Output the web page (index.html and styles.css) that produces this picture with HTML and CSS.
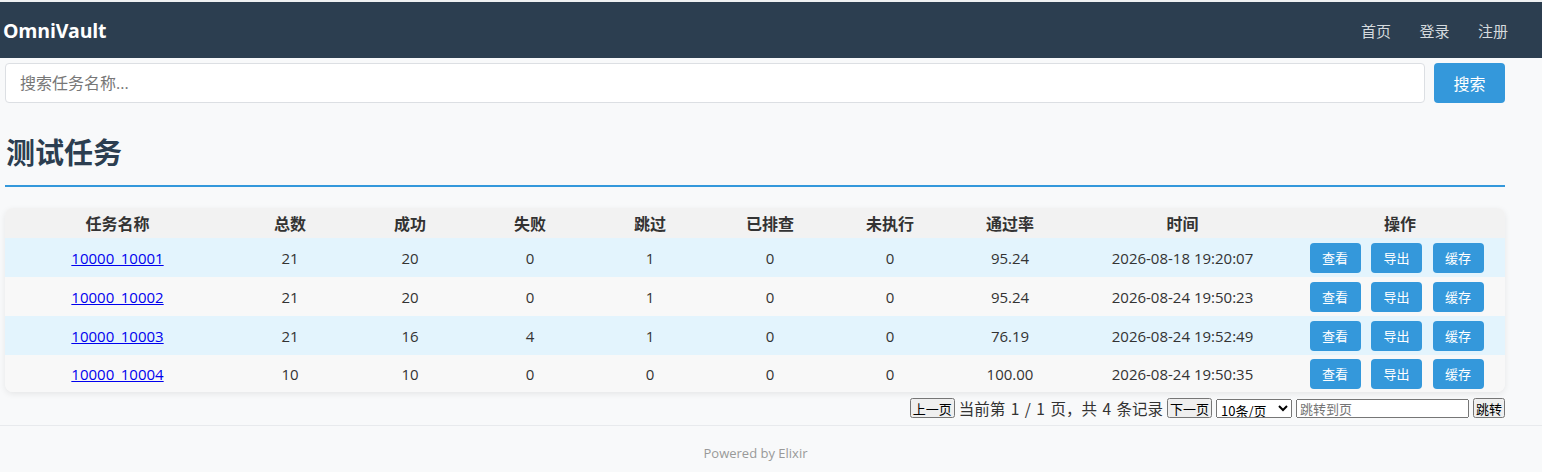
FILE: index.html
```html
<!DOCTYPE html>
<html lang="zh-CN">
<head>
<meta charset="utf-8">
<title>OmniVault</title>
<link rel="stylesheet" href="styles.css">
</head>
<body>
<nav class="navbar">
  <div class="brand">OmniVault</div>
  <div class="nav-links">
    <a href="#">首页</a>
    <a href="#">登录</a>
    <a href="#">注册</a>
  </div>
</nav>
<main class="container">
  <form class="search-row">
    <input class="search-input" type="text" placeholder="搜索任务名称...">
    <button class="search-btn" type="button">搜索</button>
  </form>
  <h1 class="title">测试任务</h1>
  <div class="table-card">
    <table class="tasks">
      <colgroup>
        <col class="c-name"><col class="c-num"><col class="c-num"><col class="c-num"><col class="c-num"><col class="c-num"><col class="c-num"><col class="c-num"><col class="c-time"><col class="c-ops">
      </colgroup>
      <thead>
        <tr><th>任务名称</th><th>总数</th><th>成功</th><th>失败</th><th>跳过</th><th>已排查</th><th>未执行</th><th>通过率</th><th>时间</th><th>操作</th></tr>
      </thead>
      <tbody>
        <tr><td><a href="#">10000_10001</a></td><td>21</td><td>20</td><td>0</td><td>1</td><td>0</td><td>0</td><td>95.24</td><td>2026-08-18 19:20:07</td><td class="ops"><div class="ops-wrap"><button>查看</button><button>导出</button><button>缓存</button></div></td></tr>
        <tr><td><a href="#">10000_10002</a></td><td>21</td><td>20</td><td>0</td><td>1</td><td>0</td><td>0</td><td>95.24</td><td>2026-08-24 19:50:23</td><td class="ops"><div class="ops-wrap"><button>查看</button><button>导出</button><button>缓存</button></div></td></tr>
        <tr><td><a href="#">10000_10003</a></td><td>21</td><td>16</td><td>4</td><td>1</td><td>0</td><td>0</td><td>76.19</td><td>2026-08-24 19:52:49</td><td class="ops"><div class="ops-wrap"><button>查看</button><button>导出</button><button>缓存</button></div></td></tr>
        <tr><td><a href="#">10000_10004</a></td><td>10</td><td>10</td><td>0</td><td>0</td><td>0</td><td>0</td><td>100.00</td><td>2026-08-24 19:50:35</td><td class="ops"><div class="ops-wrap"><button>查看</button><button>导出</button><button>缓存</button></div></td></tr>
      </tbody>
    </table>
  </div>
  <div class="pager">
    <button>上一页</button>
    <span class="pager-info">当前第 1 / 1 页，共 4 条记录</span>
    <button>下一页</button>
    <select><option>10条/页</option><option>20条/页</option></select>
    <input class="jump" type="text" placeholder="跳转到页">
    <button>跳转</button>
  </div>
</main>
<footer class="footer">Powered by Elixir</footer>
</body>
</html>
```

FILE: styles.css
```css
html, body {
  margin: 0;
  padding: 0;
}
body {
  background: #f8f9fa;
  font-family: "Open Sans", "Noto Sans CJK SC", sans-serif;
  color: #333;
  border-top: 2px solid #eef0f2;
}
.navbar {
  background: #2c3e50;
  height: 56px;
  display: flex;
  align-items: center;
  justify-content: space-between;
  padding: 0 34px 0 3px;
}
.brand {
  color: #fff;
  font-weight: 700;
  font-size: 19.5px;
  letter-spacing: -0.2px;
}
.nav-links {
  display: flex;
  gap: 28.5px;
}
.nav-links a {
  color: #d5dade;
  text-decoration: none;
  font-size: 15px;
}
.container {
  width: 1500px;
  padding: 0 5px;
}
.search-row {
  display: flex;
  gap: 9px;
  margin: 5px 0 0;
}
.search-input {
  flex: 1;
  height: 40px;
  box-sizing: border-box;
  border: 1px solid #dcdfe3;
  border-radius: 4px;
  padding: 0 14px;
  font-size: 16px;
  font-family: inherit;
  background: #fff;
}
.search-input::placeholder {
  color: #777;
}
.search-btn {
  width: 71px;
  height: 40px;
  border: none;
  border-radius: 4px;
  background: #3498db;
  color: #fff;
  font-size: 16px;
  font-family: inherit;
}
.title {
  margin: 30px 0 0;
  font-size: 29px;
  font-weight: 700;
  color: #2c3e50;
  line-height: 40px;
  padding-bottom: 12px;
  border-bottom: 2px solid #3498db;
  padding-left: 1px;
}
.table-card {
  margin-top: 21px;
  background: #f8f8f8;
  border-radius: 8px;
  box-shadow: 0 2px 6px rgba(0,0,0,0.08);
  overflow: hidden;
}
.tasks {
  width: 100%;
  border-collapse: collapse;
  table-layout: fixed;
  font-size: 15px;
}
.c-name { width: 225px; }
.c-num { width: 120px; }
.c-time { width: 225px; }
.c-ops { width: 210px; }
.tasks th {
  background: #f2f2f2;
  height: 30px;
  font-size: 16px;
  font-weight: 700;
  color: #333;
  text-align: center;
  padding: 0;
}
.tasks td {
  height: 39px;
  text-align: center;
  padding: 0;
}
.tasks tbody tr:nth-child(odd) { background: #e3f4fd; }
.tasks tbody tr:nth-child(even) { background: #f8f8f8; }
.tasks tbody tr:last-child td { height: 37px; }
.tasks a {
  color: #0000ee;
  text-decoration: underline;
}
.ops-wrap {
  display: flex;
  justify-content: center;
  gap: 10.5px;
  padding-right: 7px;
}
.ops button {
  width: 51px;
  height: 30px;
  border: none;
  border-radius: 4px;
  background: #3498db;
  color: #fff;
  font-size: 13px;
  font-family: inherit;
  padding: 0;
}
.pager {
  display: flex;
  justify-content: flex-end;
  align-items: center;
  gap: 4px;
  margin-top: 6px;
  height: 20px;
}
.pager-info {
  font-family: "Noto Sans CJK SC", sans-serif;
  font-size: 15.5px;
  line-height: 20px;
  word-spacing: 2px;
}
.pager button, .pager select, .pager input {
  font-family: "Noto Sans CJK SC", sans-serif;
  font-size: 13px;
}
.pager button {
  height: 20px;
  padding: 0 1px;
  line-height: 1;
}
.pager select {
  height: 19px;
  width: 76px;
  padding: 0;
}
.pager .jump {
  width: 173px;
  height: 19px;
  box-sizing: border-box;
  padding: 0 2px;
}
.footer {
  margin-top: 7px;
  border-top: 1px solid #e8eaed;
  text-align: center;
  color: #999;
  font-size: 13px;
  padding: 18px 31px 0 0;
  height: 46px;
  box-sizing: border-box;
}
```
